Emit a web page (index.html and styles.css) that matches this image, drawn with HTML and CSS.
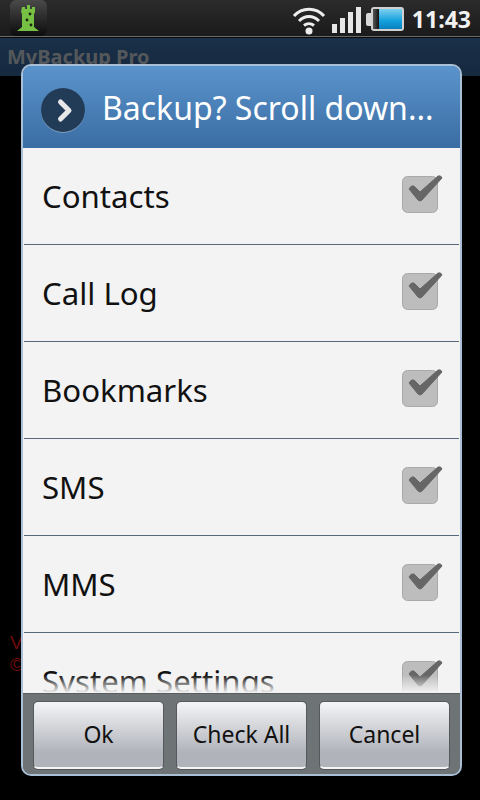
FILE: index.html
```html
<!DOCTYPE html>
<html lang="en">
<head>
<meta charset="utf-8">
<title>MyBackup Pro</title>
<link rel="stylesheet" href="styles.css">
</head>
<body>
<svg class="defs" width="0" height="0">
  <symbol id="tick" viewBox="0 0 42 40">
    <rect x="1.500" y="2.500" width="35" height="36" rx="5" fill="#bdbdbd" stroke="#a9a9a9"/>
    <path d="M8 15Q10 11 13 12L19 18L37 2Q40 1 41 4L21 26Q19 28 17 26Z" fill="#666666" stroke="#666666" stroke-linejoin="round"/>
  </symbol>
</svg>
<div class="screen">
  <header class="status">
    <div class="app-icon">
      <svg width="37" height="36" viewBox="0 0 37 36">
        <path d="M12 7h3v2h2V5h3v4h2V7h3v5l-1 2v13l5 4H7l5-4V14l-1-2z" fill="#76c043"/>
        <circle cx="20" cy="14" r="1.400" fill="#1b2412"/>
        <circle cx="17" cy="20" r="1.400" fill="#1b2412"/>
        <circle cx="21" cy="25" r="1.400" fill="#1b2412"/>
      </svg>
    </div>
    <div class="status-right">
      <svg class="wifi" width="34" height="32" viewBox="0 0 34 32">
        <path d="M2 13C10 4 24 4 32 13M7 18C13 12 21 12 27 18M12 22.500C15 20 19 20 22 22.500" fill="none" stroke="#eeeeee" stroke-width="3"/>
        <circle cx="17" cy="28" r="3.500" fill="#eeeeee"/>
      </svg>
      <div class="bars">
        <span class="bar bar1"></span><span class="bar bar2"></span><span class="bar bar3"></span><span class="bar bar4"></span>
      </div>
      <div class="battery">
        <span class="nub"></span>
        <span class="cell"><span class="empty"></span><span class="fill"></span></span>
      </div>
      <span class="clock">11:43</span>
    </div>
  </header>
  <div class="appbar"><span class="apptitle">MyBackup Pro</span></div>
  <div class="behind">
    <p>V</p>
    <p>©</p>
  </div>

  <section class="dialog">
    <div class="dialog-title">
      <span class="round">
        <svg width="44" height="44" viewBox="0 0 44 44"><path d="M19.500 14l8.500 8.500-8.500 8.500" fill="none" stroke="#e8e8e8" stroke-width="5" stroke-linecap="round" stroke-linejoin="round"/></svg>
      </span>
      <h1>Backup? Scroll down...</h1>
    </div>
    <div class="list">
      <div class="row"><span>Contacts</span><svg class="check" width="42" height="40"><use href="#tick"/></svg></div>
      <div class="row"><span>Call Log</span><svg class="check" width="42" height="40"><use href="#tick"/></svg></div>
      <div class="row"><span>Bookmarks</span><svg class="check" width="42" height="40"><use href="#tick"/></svg></div>
      <div class="row"><span>SMS</span><svg class="check" width="42" height="40"><use href="#tick"/></svg></div>
      <div class="row"><span>MMS</span><svg class="check" width="42" height="40"><use href="#tick"/></svg></div>
      <div class="row"><span>System Settings</span><svg class="check" width="42" height="40"><use href="#tick"/></svg></div>
      <div class="fade"></div>
    </div>
    <div class="actions">
      <button class="btn">Ok</button>
      <button class="btn">Check All</button>
      <button class="btn">Cancel</button>
    </div>
  </section>
</div>
</body>
</html>
```
FILE: styles.css
```css
* { box-sizing: border-box; }
html, body { margin: 0; padding: 0; background: #000; }
.defs { position: absolute; }
.screen {
  position: relative;
  width: 480px;
  height: 800px;
  overflow: hidden;
  background: #000;
  font-family: "Noto Sans", "Open Sans", sans-serif;
}
.status {
  height: 38px;
  display: flex;
  justify-content: space-between;
  background: linear-gradient(#2b2b2b, #1a1a1a);
  border-bottom: 1px solid #0a0a0a;
  box-shadow: inset 0 -1px 0 #6b6b6b;
  padding-left: 10px;
}
.app-icon {
  width: 37px;
  height: 36px;
  border-radius: 6px;
  background: linear-gradient(#4a4a4a, #0c0c0c);
}
.app-icon svg { display: block; }
.status-right { display: flex; align-items: flex-start; }
.wifi { margin-top: 3px; margin-right: 6px; }
.bars { display: flex; align-items: flex-end; gap: 3px; height: 26px; margin-top: 7px; margin-right: 5px; }
.bar { width: 5px; background: #e6e6e6; }
.bar1 { height: 9px; }
.bar2 { height: 15px; }
.bar3 { height: 21px; }
.bar4 { height: 26px; }
.battery { display: flex; align-items: center; margin-top: 7px; margin-right: 8px; }
.nub { width: 5px; height: 13px; background: #d8d8d8; border-radius: 2px 0 0 2px; }
.cell {
  display: flex;
  width: 33px;
  height: 24px;
  border: 2px solid #d0d0d0;
  border-radius: 3px;
  background: #222;
}
.empty { width: 6px; background: linear-gradient(90deg, #555, #111); }
.fill { flex: 1; background: linear-gradient(#7fd0f0, #12a0dc 60%, #0a7fbe); }
.clock {
  color: #f2f2f2;
  font-size: 23px;
  font-weight: 700;
  line-height: 38px;
  margin-right: 9px;
  font-family: "Open Sans", sans-serif;
}
.appbar {
  height: 38px;
  background: linear-gradient(#1a3048, #15293f);
  padding-left: 7px;
}
.apptitle {
  font-size: 20px;
  font-weight: 700;
  line-height: 37px;
  color: #55585b;
  display: block;
}
.behind {
  color: #6e0c0c;
  font-family: "Liberation Sans", sans-serif;
  font-size: 19px;
  line-height: 22px;
  padding: 556px 0 0 10px;
}
.behind p { margin: 0; }
.dialog {
  position: absolute;
  left: 21px;
  top: 64px;
  width: 441px;
  height: 712px;
  display: flex;
  flex-direction: column;
  border: 2px solid #a9bfd6;
  border-radius: 10px;
  overflow: hidden;
  background: #6e7375;
}
.dialog-title {
  height: 82px;
  flex: none;
  display: flex;
  align-items: center;
  gap: 17px;
  padding-left: 18px;
  background: linear-gradient(#5a94cc, #3a6da3);
}
.round {
  width: 44px;
  height: 44px;
  margin-top: 6px;
  border-radius: 50%;
  background: #223c58;
  box-shadow: 0 1px 0 #7b9dc0;
  flex: none;
}
.round svg { display: block; }
.dialog-title h1 {
  margin: 0;
  font-size: 32px;
  font-weight: 400;
  color: #fff;
  white-space: nowrap;
}
.list {
  position: relative;
  height: 545px;
  flex: none;
  overflow: hidden;
  background: #f3f3f3;
}
.row {
  height: 97px;
  display: flex;
  align-items: center;
  justify-content: space-between;
  padding: 0 16px 1px 18px;
  border-bottom: 1px solid #57697b;
  margin: 0 1px;
  font-size: 31.200px;
  color: #111;
}
.check { flex: none; margin-top: -3px; }
.fade {
  position: absolute;
  left: 0;
  right: 0;
  bottom: 0;
  height: 18px;
  background: linear-gradient(rgba(243,243,243,0), #f3f3f3);
}
.actions {
  flex: 1;
  display: flex;
  gap: 12px;
  padding: 7px 10px 7px;
  background: #6e7375;
  border-top: 1px solid #585d60;
}
.btn {
  flex: 1;
  height: 68px;
  border: 1px solid #55595c;
  border-bottom: 2px solid #f4f4f4;
  border-radius: 5px;
  box-shadow: 0 1px 0 #55595c;
  background: linear-gradient(#f4f5f7, #b0b3ba 78%);
  font-family: inherit;
  font-size: 23px;
  color: #111;
  padding: 0 0 2px;
}
```
